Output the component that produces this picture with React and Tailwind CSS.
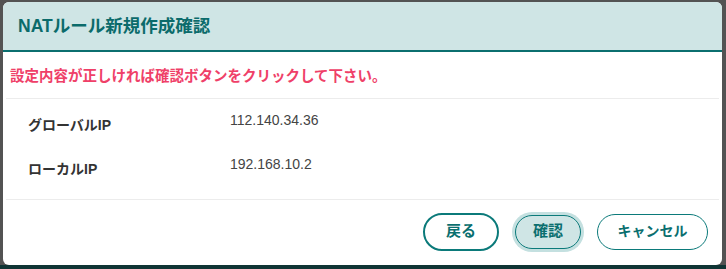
export default function App() {
  const jp = { fontFamily: '"Liberation Sans", "Noto Sans CJK JP", sans-serif' };
  return (
    <div className="relative flex h-[269px] w-[726px] flex-col bg-[#535353]" style={jp}>
      <div className="flex-1" />
      <div className="h-[4px] bg-[#0f3434]" />

      <div className="absolute left-[3px] top-[2px] flex h-[263px] w-[719px] flex-col overflow-hidden rounded-[6px] bg-white">
        <div className="flex h-[50px] items-center border-b-2 border-[#0b6f6f] bg-[#cfe5e5] px-[15px]">
          <h1 className="text-[17.5px] font-bold text-[#0b6b6b]">NATルール新規作成確認</h1>
        </div>

        <div className="mx-[3px] flex h-[47px] items-center border-b border-[#ececec] px-[4px] pt-[4px]">
          <p className="text-[14.5px] font-bold text-[#ef4068]">
            設定内容が正しければ確認ボタンをクリックして下さい。
          </p>
        </div>

        <div className="mx-[3px] flex h-[101px] flex-col border-b border-[#ececec] px-[22px] pt-[11px] text-[14px]">
          <div className="flex h-[44px]">
            <span className="w-[202px] pt-[5px] font-bold text-[#333]">グローバルIP</span>
            <span className="text-[#444]">112.140.34.36</span>
          </div>
          <div className="flex h-[44px]">
            <span className="w-[202px] pt-[5px] font-bold text-[#333]">ローカルIP</span>
            <span className="text-[#444]">192.168.10.2</span>
          </div>
        </div>

        <div className="flex flex-1 items-center justify-end gap-[13px] pr-[14px] pb-[2px]">
          <button className="h-[38px] w-[76px] rounded-full border-2 border-[#0b7a7a] bg-white text-[15px] font-bold text-[#0b6f6f]">
            戻る
          </button>
          <button className="mx-[3px] h-[34px] w-[66px] rounded-full border-[1.5px] border-[#0b7a7a] bg-[#cfe5e5] text-[15px] font-bold text-[#0b6f6f] shadow-[0_0_0_3px_#c4e0e0]">
            確認
          </button>
          <button className="h-[36px] w-[111px] rounded-full border-[1.5px] border-[#0b7a7a] bg-white text-[14px] font-bold text-[#0b6f6f]">
            キャンセル
          </button>
        </div>
      </div>
    </div>
  );
}
